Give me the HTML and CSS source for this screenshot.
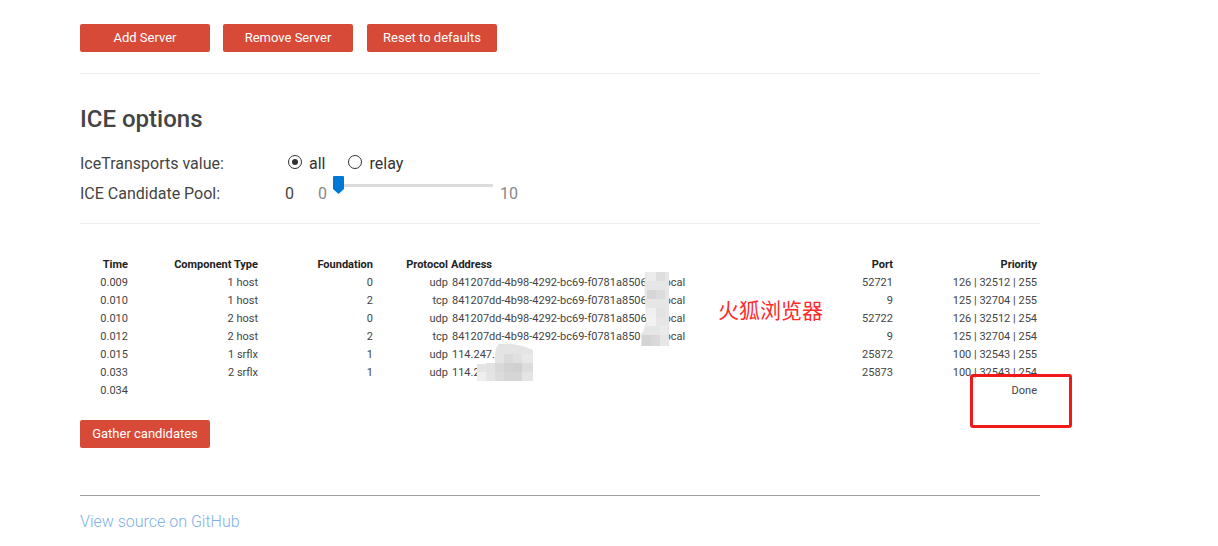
FILE: index.html
```html
<!DOCTYPE html>
<html>
<head>
<meta charset="utf-8">
<link rel="stylesheet" href="styles.css">
</head>
<body>
<div class="container">
  <div class="btn-row">
    <button class="btn">Add Server</button>
    <button class="btn">Remove Server</button>
    <button class="btn">Reset to defaults</button>
  </div>
  <hr class="sep">
  <h2 class="title">ICE options</h2>
  <div class="opt-row">
    <span class="opt-label">IceTransports value:</span>
    <span class="radio checked"></span><span class="radio-text">all</span>
    <span class="radio radio-second"></span><span class="radio-text">relay</span>
  </div>
  <div class="opt-row">
    <span class="opt-label">ICE Candidate Pool:</span>
    <span class="pool-val">0</span>
    <span class="range-min">0</span>
    <span class="slider">
      <span class="track"></span>
      <svg class="thumb" width="11" height="18" viewBox="0 0 11 18"><path d="M1 0 H10 A1 1 0 0 1 11 1 V13 L5.5 18 L0 13 V1 A1 1 0 0 1 1 0 Z" fill="#0078d7"/></svg>
    </span>
    <span class="range-max">10</span>
  </div>
  <hr class="sep sep2">
  <div class="results">
    <table class="cands">
      <colgroup>
        <col class="c-time"><col class="c-comp"><col class="c-found"><col class="c-proto"><col class="c-addr"><col class="c-port"><col class="c-prio">
      </colgroup>
      <thead>
        <tr><th>Time</th><th>Component Type</th><th>Foundation</th><th>Protocol</th><th class="left">Address</th><th>Port</th><th>Priority</th></tr>
      </thead>
      <tbody>
        <tr><td>0.009</td><td>1 host</td><td>0</td><td>udp</td><td class="left">841207dd-4b98-4292-bc69-f0781a8506ab.local</td><td>52721</td><td>126 | 32512 | 255</td></tr>
        <tr><td>0.010</td><td>1 host</td><td>2</td><td>tcp</td><td class="left">841207dd-4b98-4292-bc69-f0781a8506ab.local</td><td>9</td><td>125 | 32704 | 255</td></tr>
        <tr><td>0.010</td><td>2 host</td><td>0</td><td>udp</td><td class="left">841207dd-4b98-4292-bc69-f0781a8506ab.local</td><td>52722</td><td>126 | 32512 | 254</td></tr>
        <tr><td>0.012</td><td>2 host</td><td>2</td><td>tcp</td><td class="left">841207dd-4b98-4292-bc69-f0781a8506ab.local</td><td>9</td><td>125 | 32704 | 254</td></tr>
        <tr><td>0.015</td><td>1 srflx</td><td>1</td><td>udp</td><td class="left">114.247.</td><td>25872</td><td>100 | 32543 | 255</td></tr>
        <tr><td>0.033</td><td>2 srflx</td><td>1</td><td>udp</td><td class="left">114.2</td><td>25873</td><td>100 | 32543 | 254</td></tr>
        <tr><td>0.034</td><td></td><td></td><td></td><td></td><td></td><td>Done</td></tr>
      </tbody>
    </table>
    <svg class="blur blur1" width="30" height="74" viewBox="0 0 30 74">
      <path d="M4 0 H28 V74 H0 V62 C4 58 6 50 5 40 C4 30 3 20 4 0 Z" fill="#e6e6e6"/>
      <rect x="6" y="0" width="9" height="9" fill="#ececec"/>
      <rect x="15" y="0" width="9" height="9" fill="#dedede"/>
      <rect x="6" y="18" width="9" height="9" fill="#d6d6d6"/>
      <rect x="15" y="18" width="9" height="9" fill="#dcdcdc"/>
      <rect x="6" y="36" width="9" height="9" fill="#f0f0f0"/>
      <rect x="15" y="36" width="9" height="9" fill="#e2e2e2"/>
      <rect x="6" y="45" width="9" height="9" fill="#f2f2f2"/>
      <rect x="1" y="63" width="9" height="11" fill="#d4d4d4"/>
      <rect x="10" y="63" width="9" height="11" fill="#d9d9d9"/>
      <rect x="19" y="54" width="7" height="9" fill="#eaeaea"/>
    </svg>
    <svg class="blur blur2" width="56" height="37" viewBox="0 0 56 37">
      <path d="M22 0 C32 -2 48 2 56 6 V37 H0 V20 H18 C18 10 18 3 22 0 Z" fill="#e4e4e4"/>
      <rect x="27" y="10" width="9" height="9" fill="#dadada"/>
      <rect x="36" y="10" width="9" height="9" fill="#e0e0e0"/>
      <rect x="45" y="10" width="11" height="9" fill="#e8e8e8"/>
      <rect x="9" y="19" width="9" height="9" fill="#e2e2e2"/>
      <rect x="18" y="19" width="9" height="9" fill="#d8d8d8"/>
      <rect x="27" y="19" width="9" height="9" fill="#d2d2d2"/>
      <rect x="36" y="19" width="9" height="9" fill="#d0d0d0"/>
      <rect x="45" y="19" width="11" height="9" fill="#dddddd"/>
      <rect x="0" y="28" width="9" height="9" fill="#eeeeee"/>
      <rect x="18" y="28" width="9" height="9" fill="#dcdcdc"/>
      <rect x="27" y="28" width="18" height="9" fill="#d6d6d6"/>
    </svg>
    <div class="note">火狐浏览器</div>
    <div class="highlight"></div>
  </div>
  <button class="btn gather">Gather candidates</button>
  <hr class="footer-sep">
  <a class="source" href="#">View source on GitHub</a>
</div>
</body>
</html>
```

FILE: styles.css
```css
html, body {
  margin: 0;
  padding: 0;
  background: #fff;
}
body {
  font-family: Roboto, "Liberation Sans", sans-serif;
  color: #444;
}
.container {
  width: 960px;
  margin-left: 80px;
  padding-top: 24px;
}
.btn-row {
  display: flex;
  gap: 13px;
  height: 28px;
}
.btn {
  width: 130px;
  height: 28px;
  border: none;
  border-radius: 2px;
  background: #d84a38;
  color: #fff;
  font-family: Roboto, "Liberation Sans", sans-serif;
  font-size: 13px;
  padding: 0 0 1px 0;
  margin: 0;
  display: block;
}
.btn-row .btn:last-child {
  margin-left: 1px;
}
.sep {
  border: none;
  border-top: 1px solid #eeeeee;
  margin: 21px 0 0 0;
  height: 0;
}
.title {
  font-size: 24px;
  font-weight: 500;
  line-height: 28px;
  margin: 31px 0 15px 0;
  color: #444;
}
.opt-row {
  display: flex;
  align-items: center;
  height: 30px;
  font-size: 16px;
  font-weight: 400;
  color: #444;
}
.opt-label {
  width: 205px;
  flex: none;
}
.radio {
  width: 12px;
  height: 12px;
  border: 1px solid #333;
  border-radius: 50%;
  margin-left: 3px;
  margin-right: 7px;
  flex: none;
  display: flex;
  align-items: center;
  justify-content: center;
  margin-top: -2px;
}
.radio.checked::after {
  content: "";
  width: 6px;
  height: 6px;
  border-radius: 50%;
  background: #333;
}
.radio-second {
  margin-left: 23px;
}
.radio-text {
  color: #333;
}
.pool-val {
  width: 33px;
  flex: none;
}
.range-min {
  color: #888;
  width: 15px;
  flex: none;
}
.range-max {
  color: #888;
  margin-left: 7px;
}
.slider {
  position: relative;
  width: 160px;
  height: 30px;
  flex: none;
}
.track {
  position: absolute;
  left: 0;
  right: 0;
  top: 6px;
  height: 3px;
  background: #dcdcdc;
}
.thumb {
  position: absolute;
  left: 0;
  top: -2px;
}
.sep2 {
  margin-top: 15px;
}
.results {
  position: relative;
  margin-top: 32px;
}
.cands {
  width: 960px;
  table-layout: fixed;
  border-collapse: collapse;
  font-size: 11px;
  line-height: 18px;
  color: #444;
}
.c-time { width: 50px; }
.c-comp { width: 130px; }
.c-found { width: 115px; }
.c-proto { width: 75px; }
.c-addr { width: 345px; }
.c-port { width: 100px; }
.c-prio { width: 145px; }
.cands th, .cands td {
  padding: 0 2px;
  text-align: right;
  white-space: nowrap;
  overflow: hidden;
  height: 18px;
}
.cands th:last-child, .cands td:last-child {
  padding-right: 3px;
}
.cands th {
  font-weight: 700;
  color: #222;
}
.cands .left {
  text-align: left;
  padding-left: 1px;
}
.cands td.left {
  padding-left: 2px;
}
.blur {
  position: absolute;
  display: block;
}
.blur1 {
  left: 561px;
  top: 16px;
}
.blur2 {
  left: 397px;
  top: 88px;
}
.note {
  position: absolute;
  left: 638px;
  top: 40px;
  font-family: "Noto Sans CJK SC", sans-serif;
  font-size: 21px;
  line-height: 26px;
  color: #ff2a2a;
}
.highlight {
  position: absolute;
  left: 890px;
  top: 118px;
  width: 96px;
  height: 48px;
  border: 3px solid #f01818;
  border-radius: 3px;
}
.gather {
  margin-top: 20px;
}
.footer-sep {
  border: none;
  border-top: 1px solid #a0a0a0;
  margin: 47px 0 0 0;
  height: 0;
}
.source {
  display: block;
  margin-top: 16px;
  font-size: 16px;
  line-height: 20px;
  font-weight: 300;
  color: #80b0e8;
  text-decoration: none;
}
```
